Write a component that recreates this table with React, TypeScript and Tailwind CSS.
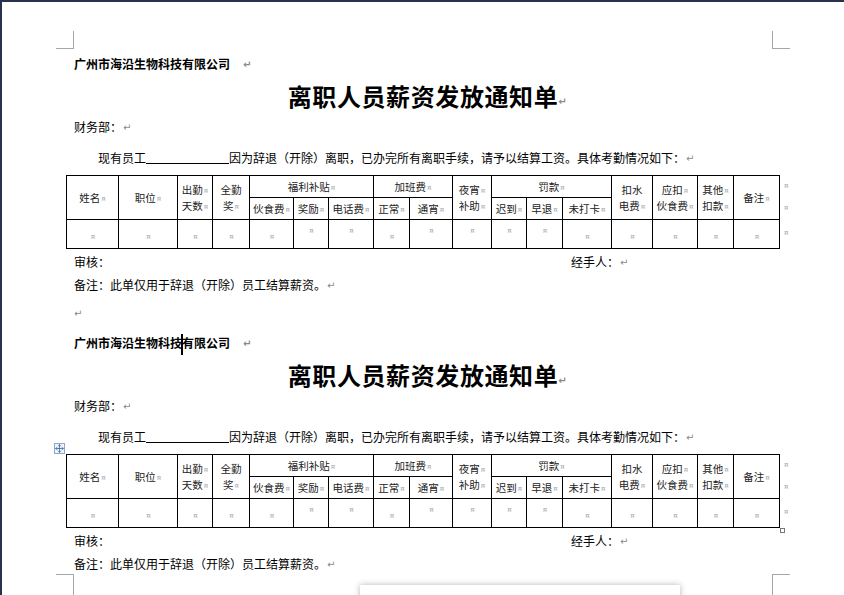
import { Move } from "lucide-react";

// 表格列宽（像素），对应 Word 里的各列
const colClasses = [
  "w-[52px]", "w-[59px]", "w-[35px]", "w-[37px]", "w-[44px]", "w-[35px]",
  "w-[45px]", "w-[36px]", "w-[43px]", "w-[39px]", "w-[35px]", "w-[36px]",
  "w-[49px]", "w-[41px]", "w-[45px]", "w-[36px]", "w-[46px]",
];

// 数据行里单元格标记靠上的列
const topMarks = [5, 6, 8, 9, 10, 11];

function Mark() {
  return (
    <i className="not-italic font-['DejaVu_Sans',sans-serif] text-[7px] leading-none text-[#a0a0a0] ml-[1px] align-[1px]">¤</i>
  );
}

function Para({ gap = "ml-[1px]" }: { gap?: string }) {
  return (
    <span className={`font-['DejaVu_Sans',sans-serif] text-[10px] text-[#8a8a8a] align-[1px] ${gap}`}>↵</span>
  );
}

const th = "border border-black p-0 text-center align-middle font-normal";

function SalaryTable({ active }: { active?: boolean }) {
  return (
    <div className="flex -ml-[8px]">
      <div className="relative">
        <table className="table-fixed border-collapse w-[713px] text-[10.5px] leading-[16px] text-[#222]">
          <colgroup>
            {colClasses.map((c, i) => (
              <col key={i} className={c} />
            ))}
          </colgroup>
          <tbody>
            <tr className="h-[22px]">
              <td rowSpan={2} className={th}>姓名<Mark /></td>
              <td rowSpan={2} className={th}>职位<Mark /></td>
              <td rowSpan={2} className={th}>出勤<Mark /><br />天数<Mark /></td>
              <td rowSpan={2} className={th}>全勤<br />奖<Mark /></td>
              <td colSpan={3} className={th}>福利补贴<Mark /></td>
              <td colSpan={2} className={th}>加班费<Mark /></td>
              <td rowSpan={2} className={th}>夜宵<Mark /><br />补助<Mark /></td>
              <td colSpan={3} className={th}>罚款<Mark /></td>
              <td rowSpan={2} className={th}>扣水<br />电费<Mark /></td>
              <td rowSpan={2} className={th}>应扣<Mark /><br />伙食费<Mark /></td>
              <td rowSpan={2} className={th}>其他<Mark /><br />扣款<Mark /></td>
              <td rowSpan={2} className={th}>备注<Mark /></td>
            </tr>
            <tr className="h-[22px]">
              {["伙食费", "奖励", "电话费", "正常", "通宵", "迟到", "早退", "未打卡"].map((t) => (
                <td key={t} className={th}>{t}<Mark /></td>
              ))}
            </tr>
            <tr className="h-[29px]">
              {colClasses.map((_, i) => (
                <td
                  key={i}
                  className={`border border-black p-0 text-center ${topMarks.includes(i) ? "align-top pt-[2px]" : "align-middle pt-[4px]"}`}
                >
                  <Mark />
                </td>
              ))}
            </tr>
          </tbody>
        </table>
        {active && (
          <>
            <div className="absolute -left-[12px] -top-[11px] w-[11px] h-[11px] border border-[#8fa8c8] bg-[#eef3fa] flex items-center justify-center text-[#2e5f9e]">
              <Move size={9} strokeWidth={2} />
            </div>
            <div className="absolute -right-[5px] -bottom-[5px] w-[5px] h-[5px] border border-[#777] bg-white" />
          </>
        )}
      </div>
      <div className="flex flex-col ml-[3px]">
        <div className="h-[22px] flex items-center"><Mark /></div>
        <div className="h-[22px] flex items-center"><Mark /></div>
        <div className="h-[29px] flex items-center"><Mark /></div>
      </div>
    </div>
  );
}

function Block({ active }: { active?: boolean }) {
  return (
    <div className="flex flex-col">
      <div className="h-[18px] leading-[18px] text-[12px] font-bold">
        广州市海沿生物科技
        {active && <span className="inline-block w-[2px] h-[21px] bg-black align-middle -mx-[1px]" />}
        有限公司
        <Para gap="ml-[13px]" />
      </div>
      <div className="mt-[8px] h-[30px] leading-[30px] text-center pl-[9px] text-[24px] font-bold tracking-[0.6px]">
        离职人员薪资发放通知单
        <Para gap="ml-0" />
      </div>
      <div className="mt-[7px] h-[18px] leading-[18px] text-[12px]">
        财务部：<Para />
      </div>
      <div className="mt-[13px] h-[18px] leading-[18px] text-[12px] pl-[24px]">
        现有员工
        <span className="inline-block w-[83px] h-[13px] border-b border-black align-[-1px]" />
        因为辞退（开除）离职，已办完所有离职手续，请予以结算工资。具体考勤情况如下：
        <Para />
      </div>
      <div className="mt-[8px]">
        <SalaryTable active={active} />
      </div>
      <div className="mt-[4px] h-[18px] leading-[18px] text-[12px] flex">
        <span className="w-[497px]">审核：</span>
        <span>
          经手人：<Para />
        </span>
      </div>
      <div className="mt-[5px] h-[18px] leading-[18px] text-[12px]">
        备注：此单仅用于辞退（开除）员工结算薪资。<Para />
      </div>
    </div>
  );
}

export default function App() {
  return (
    <div className="relative w-[844px] h-[595px] overflow-hidden bg-white border-t-2 border-l-2 border-[#27334d] text-black font-['Noto_Sans_CJK_SC','Noto_Sans',sans-serif]">
      {/* 页面四角的裁切标记 */}
      <div className="absolute left-[54px] top-[29px] w-[18px] h-[18px] border-r border-b border-[#a6a6a6]" />
      <div className="absolute left-[770px] top-[29px] w-[18px] h-[18px] border-l border-b border-[#a6a6a6]" />
      <div className="absolute left-[54px] top-[572px] w-[18px] h-[30px] border-r border-t border-[#a6a6a6]" />
      <div className="absolute left-[770px] top-[572px] w-[18px] h-[30px] border-l border-t border-[#a6a6a6]" />

      <div className="pl-[72px] pt-[53px] w-[770px]">
        <Block />
        <div className="mt-[10px] h-[18px] leading-[18px] text-[12px]">
          <Para gap="ml-0" />
        </div>
        <div className="mt-[12px]">
          <Block active />
        </div>
      </div>

      {/* 底部弹出的浮层 */}
      <div className="absolute left-[358px] top-[583px] w-[320px] h-[24px] bg-white shadow-[0_0_6px_rgba(0,0,0,0.3)]" />
    </div>
  );
}
